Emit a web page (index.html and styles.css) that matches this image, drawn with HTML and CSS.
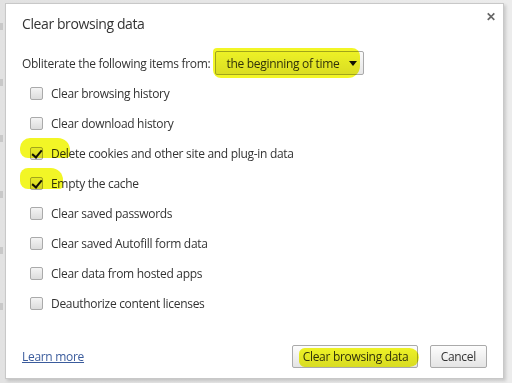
FILE: index.html
```html
<!DOCTYPE html>
<html>
<head>
  <meta charset="UTF-8">
  <title>Clear browsing data</title>
  <link rel="stylesheet" href="styles.css">
</head>
<body>
  <div class="backdrop">
    <div class="page-edge">
      <i></i><i></i><i></i><i></i><i></i><i></i>
    </div>
    <div class="dialog">
      <div class="title-row">
        <h1>Clear browsing data</h1>
        <span class="close">&#x2715;</span>
      </div>

      <div class="period">
        <label>Obliterate the following items from:</label>
        <div class="select">
          <span>the beginning of time</span>
          <span class="arrow"></span>
        </div>
      </div>

      <ul class="options">
        <li><span class="box"></span>Clear browsing history</li>
        <li><span class="box"></span>Clear download history</li>
        <li><span class="box checked"></span>Delete cookies and other site and plug-in data</li>
        <li><span class="box checked"></span>Empty the cache</li>
        <li><span class="box"></span>Clear saved passwords</li>
        <li><span class="box"></span>Clear saved Autofill form data</li>
        <li><span class="box"></span>Clear data from hosted apps</li>
        <li><span class="box"></span>Deauthorize content licenses</li>
      </ul>

      <div class="footer">
        <a href="#">Learn more</a>
        <div class="buttons">
          <button class="primary">Clear browsing data</button>
          <button>Cancel</button>
        </div>
      </div>

      <!-- highlighter marks drawn over the dialog -->
      <div class="mark mark-select"></div>
      <div class="mark mark-cookies"></div>
      <div class="mark mark-cache"></div>
      <div class="mark mark-button"></div>
    </div>
  </div>
</body>
</html>
```

FILE: styles.css
```css
body {
  margin: 0;
  font-family: 'Open Sans', 'Noto Sans', sans-serif;
  color: #333;
}
.backdrop {
  display: flex;
  height: 383px;
  background: linear-gradient(to right, #e2e2e2, #ececec);
  padding-top: 3px;
  box-sizing: border-box;
}
.page-edge {
  width: 5px;
  display: flex;
  flex-direction: column;
  gap: 49px;
  padding-top: 20px;
}
.page-edge i {
  display: block;
  width: 3px;
  height: 7px;
  background: #c8c8c8;
}
.dialog {
  position: relative;
  width: 499px;
  height: 376px;
  box-sizing: border-box;
  background: #fff;
  border: 1px solid #c8c8c8;
  box-shadow: 2px 2px 3px rgba(0,0,0,0.15);
  padding: 0 16px;
  display: flex;
  flex-direction: column;
  letter-spacing: -0.3px;
}
.title-row {
  display: flex;
  justify-content: space-between;
  align-items: flex-start;
  height: 46px;
}
h1 {
  margin: 10px 0 0 0;
  font-size: 14px;
  font-weight: normal;
  letter-spacing: -0.4px;
  color: #333;
}
.close {
  margin: 4px -9px 0 0;
  font-size: 12px;
  font-weight: bold;
  color: #666;
}
.period {
  display: flex;
  align-items: center;
  font-size: 12px;
  height: 26px;
  white-space: nowrap;
}
.period label {
  margin-right: 5px;
}
.select {
  display: flex;
  align-items: center;
  justify-content: space-between;
  width: 149px;
  height: 24px;
  box-sizing: border-box;
  border: 1px solid #aaa;
  border-radius: 2px;
  background: linear-gradient(#fafafa, #e6e6e6);
  padding: 0 6px 0 10px;
}
.arrow {
  width: 0;
  height: 0;
  border-left: 4px solid transparent;
  border-right: 4px solid transparent;
  border-top: 5px solid #111;
}
.options {
  list-style: none;
  margin: 2px 0 0 0;
  padding: 0 0 0 8px;
  font-size: 12px;
}
.options li {
  display: flex;
  align-items: center;
  height: 30px;
}
.box {
  position: relative;
  width: 13px;
  height: 13px;
  box-sizing: border-box;
  border: 1px solid #aaa;
  border-radius: 2px;
  background: linear-gradient(#f4f4f4, #dcdcdc);
  margin-right: 8px;
}
.box.checked::after {
  content: "";
  position: absolute;
  left: 3px;
  top: 0;
  width: 4px;
  height: 8px;
  border-right: 2.5px solid #111;
  border-bottom: 2.5px solid #111;
  transform: rotate(40deg);
}
.footer {
  margin-top: auto;
  margin-bottom: 10px;
  display: flex;
  justify-content: space-between;
  align-items: center;
  font-size: 12px;
}
.footer a {
  color: #3a5b9c;
}
.buttons {
  display: flex;
  gap: 12px;
}
button {
  font-family: 'Open Sans', 'Noto Sans', sans-serif;
  font-size: 12px;
  letter-spacing: -0.3px;
  white-space: nowrap;
  color: #333;
  height: 23px;
  padding: 0 10px;
  border: 1px solid #aaa;
  border-radius: 2px;
  background: linear-gradient(#fdfdfd, #e4e4e4);
}
button.primary {
  width: 126px;
}
.mark {
  position: absolute;
  background: rgba(240, 245, 0, 0.85);
  mix-blend-mode: multiply;
}
.mark-select {
  left: 207px;
  top: 44px;
  width: 147px;
  height: 30px;
  border-radius: 4px 8px 12px 8px;
}
.mark-cookies {
  left: 14px;
  top: 134px;
  width: 50px;
  height: 20px;
  border-radius: 10px 12px 4px 8px;
}
.mark-cache {
  left: 14px;
  top: 164px;
  width: 43px;
  height: 21px;
  border-radius: 8px 12px 4px 8px;
}
.mark-button {
  left: 293px;
  top: 344px;
  width: 120px;
  height: 19px;
  border-radius: 6px 10px 10px 6px;
}
```
